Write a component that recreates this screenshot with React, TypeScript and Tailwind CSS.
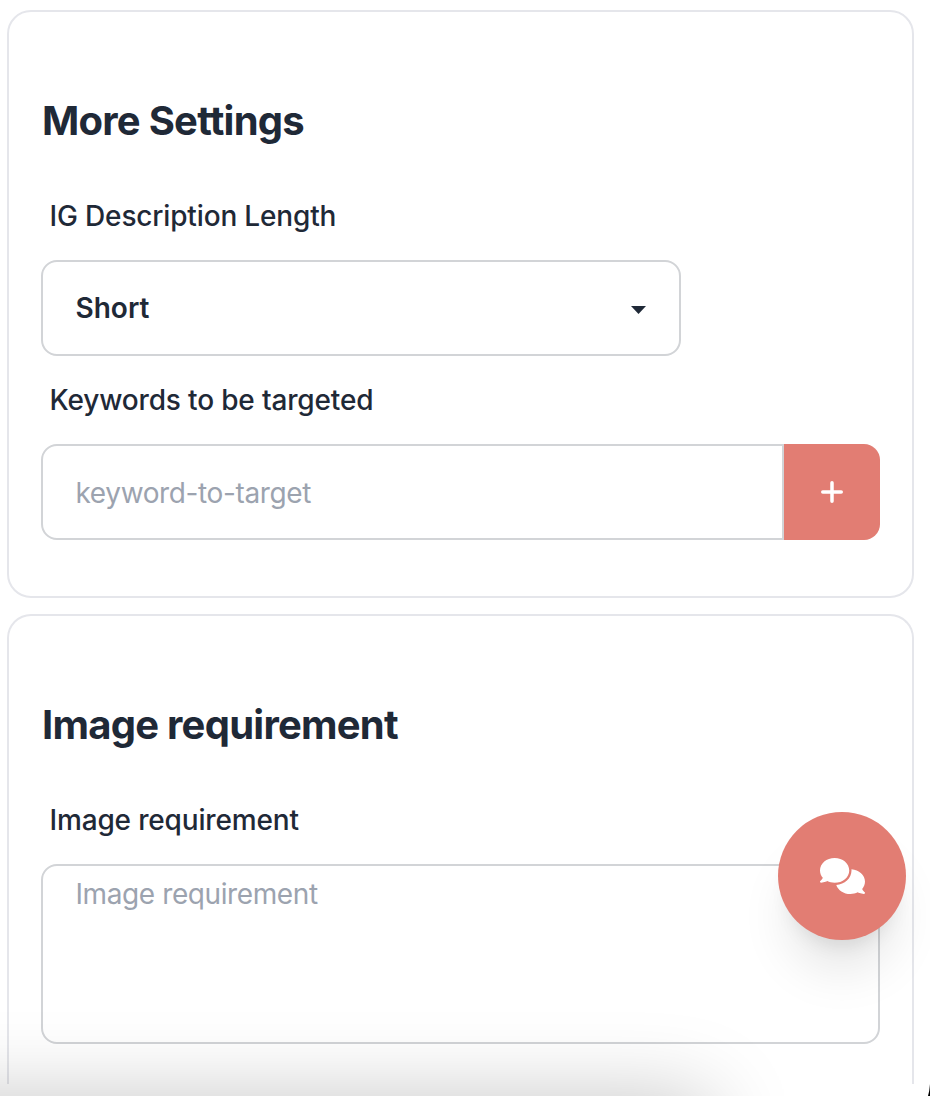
import type { ReactNode } from "react";
import { FaComments } from "react-icons/fa6";

function Card({ title, className, children }: { title: string; className: string; children: ReactNode }) {
  return (
    <section className={`border-2 border-[#e5e6eb] px-8 pt-[81px] ${className}`}>
      <h2 className="h-[55px] pl-px text-[40px] leading-14 font-bold tracking-[-0.75px] whitespace-nowrap">{title}</h2>
      {children}
    </section>
  );
}

export default function App() {
  return (
    <main className="relative h-[1096px] w-[930px] overflow-hidden bg-white pt-2.5 pl-[7px] font-['Inter',sans-serif] text-[28px] leading-10 text-[#1f2937]">
      <div className="flex w-[907px] flex-col gap-4">
        <Card title="More Settings" className="h-[588px] rounded-[24px]">
          <label className="mt-12 block pl-[8.5px] font-medium tracking-[-0.16px]">IG Description Length</label>
          <button className="mt-6 flex h-24 w-[640px] items-center justify-between rounded-2xl border-2 border-[#d2d4d7] pr-8 pl-[32.5px] text-left font-semibold">
            <span>Short</span>
            <svg className="mt-[3px] h-2 w-[16px]" viewBox="0 0 16 8" fill="currentColor"><path d="M0 0h15L7.5 8z" /></svg>
          </button>
          <label className="mt-6 block pl-[8.5px] font-medium tracking-[-0.16px]">Keywords to be targeted</label>
          <div className="mt-6 flex h-24">
            <input className="h-24 w-[743px] rounded-l-2xl border-2 border-[#d2d4d7] px-[32.5px] pt-0.5 tracking-[-0.37px] placeholder:text-[#9ca3af]" placeholder="keyword-to-target" />
            <button className="flex h-24 w-24 items-center justify-center rounded-r-2xl bg-[#e27d73] text-white" aria-label="Add keyword">
              <svg className="size-6" viewBox="0 0 24 24" fill="none" stroke="currentColor" strokeWidth="3.5" strokeLinecap="round"><path d="M12 2.75v18.5M2.75 12h18.5" /></svg>
            </button>
          </div>
        </Card>
        <Card title="Image requirement" className="h-[470px] rounded-t-[24px] border-b-0">
          <label className="mt-12 block pl-[8.5px] font-medium tracking-[-0.16px]">Image requirement</label>
          <textarea className="mt-6 block h-[180px] w-full resize-none rounded-2xl border-2 border-[#d2d4d7] px-[32.5px] py-2 tracking-[-0.4px] placeholder:text-[#9ca3af]" placeholder="Image requirement" />
        </Card>
      </div>
      <button className="absolute top-[812px] left-[778px] flex size-32 items-center justify-center rounded-full bg-[#e27d73] text-white shadow-[0_40px_50px_-10px_rgba(0,0,0,0.1),0_16px_20px_-12px_rgba(0,0,0,0.1)]" aria-label="Open chat">
        <FaComments className="h-9 w-[45px]" />
      </button>
      <div className="absolute top-[1096px] -left-40 h-40 w-[870px] shadow-[0_0_84px_rgba(0,0,0,0.22)]" />
      <svg className="absolute right-0 bottom-0 h-3 w-0.5" viewBox="0 0 2 12"><path d="M2 0v12H0Q1.5 7 2 0" /></svg>
    </main>
  );
}
